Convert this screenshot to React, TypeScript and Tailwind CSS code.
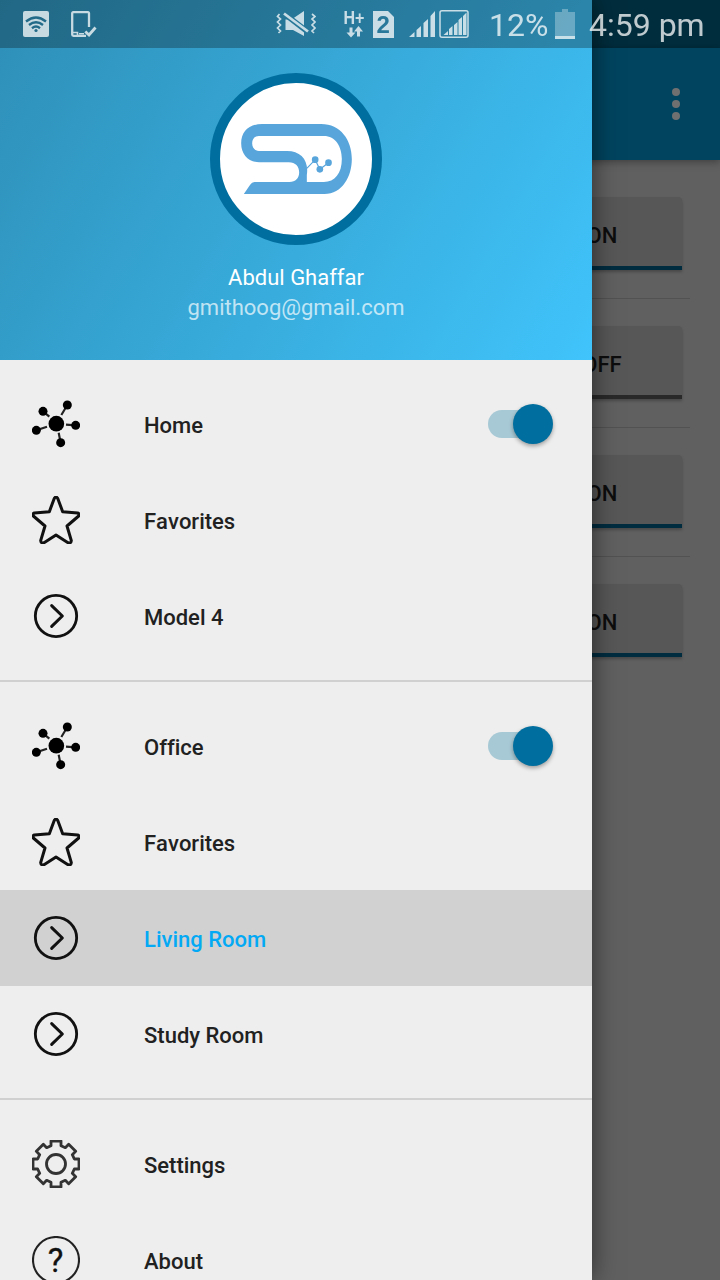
import React from "react";

const HubIcon = () => (
  <svg viewBox="0 0 144 144" className="size-12" stroke="#222" strokeWidth="6.5">
    <path d="M33 34L52 50M106 15L88 45M131 76L102 74M13 91L45 80M86 128L80 98" />
    <g fill="#000" stroke="none">
      <circle cx="73" cy="71" r="23.5" />
      <circle cx="33" cy="34" r="13.5" />
      <circle cx="106" cy="15" r="13.5" />
      <circle cx="131" cy="76" r="13.5" />
      <circle cx="13" cy="91" r="13.5" />
      <circle cx="86" cy="128" r="13.5" />
    </g>
  </svg>
);

const StarIcon = () => (
  <svg viewBox="0 0 144 144" className="size-12" fill="none" stroke="#111" strokeWidth="9" strokeLinejoin="round">
    <path d="M67 7Q72 -1 77 7L92 47L137 51Q145 54 140 60L105 90L118 134Q117 143 108 140L72 117L36 140Q27 143 26 134L39 90L4 60Q-1 54 7 51L52 47Z" />
  </svg>
);

const ChevronCircleIcon = () => (
  <svg viewBox="0 0 144 144" className="size-12" fill="none" stroke="#111" strokeLinecap="round" strokeLinejoin="round">
    <circle cx="72" cy="72" r="62" strokeWidth="8.5" />
    <path d="M59 41L91 72L59 103" strokeWidth="9" />
  </svg>
);

const GearIcon = () => (
  <svg viewBox="0 0 144 144" className="size-12" fill="none" stroke="#333" strokeWidth="8.5" strokeLinejoin="round">
    <path d="M57 3H87V17L100 23L110 13L131 34L121 44L127 57H141V87H127L121 100L131 110L110 131L100 121L87 127V141H57V127L44 121L34 131L13 110L23 100L17 87H3V57H17L23 44L13 34L34 13L44 23L57 17Z" />
    <circle cx="72" cy="72" r="28.5" />
  </svg>
);

const HelpIcon = () => (
  <svg viewBox="0 0 48 48" className="size-12">
    <circle cx="24" cy="24" r="23" fill="none" stroke="#222" strokeWidth="2.1" />
    <text x="23.5" y="35.7" textAnchor="middle" fontFamily="Roboto, sans-serif" fontSize="33" fill="#111" stroke="#111" strokeWidth=".3">?</text>
  </svg>
);

const Logo = () => (
  <svg viewBox="182 192 332 210" className="h-[70px] w-[111px]" fill="#58a5dc">
    <path
      fillRule="evenodd"
      d="M190 402H432C485 402 514 350 514 297C514 240 480 192 422 192H245C205 192 182 215 182 250C182 285 205 307 237 307H325C345 307 356 320 356 337C356 355 345 366 327 366H222Q214 366 209 374ZM235 228H430C465 228 484 260 484 297C484 340 463 366 430 366H379V345C386 300 360 273 320 273H235C222 273 215 262 215 250C215 238 222 228 235 228Z"
    />
    <path d="M379 325L404 299L418 328L444 308" fill="none" stroke="#58a5dc" strokeWidth="3.5" />
    <circle cx="404" cy="299" r="10" />
    <circle cx="418" cy="328" r="10" />
    <circle cx="444" cy="308" r="10" />
  </svg>
);

const StatusBar = () => (
  <div className="absolute inset-x-0 top-0 flex h-12 items-center text-[32px] text-white opacity-75">
    <svg viewBox="0 0 26 26" className="ml-[23px] h-[26px] w-[26px]">
      <mask id="wifi-mask">
        <rect width="26" height="26" fill="#fff" />
        <g fill="none" stroke="#000" strokeWidth="2.4">
          <path d="M3 10.5Q13 2.500 23 10.500M6 14Q13 8.500 20 14M9 17.200Q13 14 17 17.200" />
        </g>
        <circle cx="13" cy="19.500" r="1.600" fill="#000" />
      </mask>
      <rect width="26" height="26" rx="2" fill="currentColor" mask="url(#wifi-mask)" />
    </svg>
    <svg viewBox="0 0 26 26" className="ml-[22px] h-[26px] w-[26px]" fill="none" stroke="currentColor">
      <path d="M18 16V2.200Q18 1.200 17 1.200H2.200Q1.200 1.200 1.200 2.200V23.500Q1.200 24.800 2.500 24.800H15" strokeWidth="2.300" />
      <path d="M2 21.500H6.500V24M8 22.700H13" strokeWidth="1.600" />
      <path d="M14.300 20.500L18 24L24.500 16.500" strokeWidth="2.800" />
    </svg>
    <svg viewBox="0 0 40 26" className="ml-[179px] h-[26px] w-10" fill="currentColor">
      <mask id="mute-mask">
        <rect width="40" height="26" fill="#fff" />
        <path d="M6 1L34 22.500" stroke="#000" strokeWidth="5.500" />
      </mask>
      <path d="M9.500 8.500h6L28 0v25L17 19H9.500z" mask="url(#mute-mask)" />
      <path d="M8 2.500L32 20.500" stroke="currentColor" strokeWidth="2.800" />
      <path d="M3.500 3L1.500 5.500L4.500 8L1.500 11L4.500 14L1.500 17L4.500 20L2.500 22M36 3L39 5.500L36 8L39 11L36 14L39 17L36 20L38 22" fill="none" stroke="currentColor" strokeWidth="1.700" />
    </svg>
    <svg viewBox="0 0 22 30" className="ml-[28px] h-[30px] w-[22px]" fill="currentColor">
      <text x="-.5" y="14.500" fontFamily="Liberation Sans, sans-serif" fontWeight="700" fontSize="18" textLength="21" lengthAdjust="spacingAndGlyphs">H+</text>
      <path d="M5.500 18.500h3v5h3l-4.500 5l-4.500-5h3zM13 27.500v-5h-3l4.500-5.500l4.500 5.500h-3v5z" />
    </svg>
    <svg viewBox="0 0 21 27" className="ml-[7px] mr-px h-[27px] w-[21px]">
      <path d="M0 0h15l6 6v21H0z" fill="currentColor" />
      <text x="10.300" y="22" textAnchor="middle" fontFamily="Liberation Sans, sans-serif" fontWeight="700" fontSize="24" fill="#29789a">2</text>
    </svg>
    <svg viewBox="0 0 26 26" className="ml-[14px] h-[26px] w-[26px]" fill="currentColor">
      <path d="M0 26L5.500 21V26zM7.500 26V19L12 15V26zM14.500 26V12L19 8V26zM21.500 26V5L26 0V26z" />
    </svg>
    <svg viewBox="0 0 30 28" className="ml-1 h-7 w-[30px]" fill="currentColor">
      <rect x="1" y=".8" width="28" height="26.400" rx="2" fill="none" stroke="currentColor" strokeWidth="1.5" />
      <path d="M4.500 25L9 21V25zM10 25V19L13.500 16V25zM15 25V15L18.500 12V25zM19.500 25V10L23 7V25zM24 25V6L27.500 2.500V25z" />
    </svg>
    <span className="ml-5 w-[66px] whitespace-nowrap pt-[2px] leading-none">12%</span>
    <svg viewBox="0 0 20 30" className="mb-px h-[30px] w-5" fill="currentColor">
      <path d="M0 3h7V0h6v3h7v24H0z" opacity=".4" />
      <path d="M0 27h20v3H0z" />
    </svg>
    <span className="ml-[14px] whitespace-nowrap pt-[2px] leading-none">4:59 pm</span>
  </div>
);

const rooms = [
  { label: "ON", bar: "bg-[#002c3f]" },
  { label: "OFF", bar: "bg-[#292929]" },
  { label: "ON", bar: "bg-[#002c3f]" },
  { label: "ON", bar: "bg-[#002c3f]" },
];

const Background = () => (
  <main className="flex h-full flex-col bg-[#606060]">
    <div className="h-12 bg-[#002d3d]" />
    <div className="z-0 flex h-28 items-center justify-end bg-[#00445f] pr-10 shadow-[0_2px_8px_rgba(0,0,0,0.35)]">
      <div className="flex flex-col gap-1">
        <i className="size-2 rounded-full bg-[#707070]" />
        <i className="size-2 rounded-full bg-[#707070]" />
        <i className="size-2 rounded-full bg-[#707070]" />
      </div>
    </div>
    <div className="px-[30px] pt-[10px]">
      {rooms.map((r, i) => (
        <div key={i} className="flex h-[129px] justify-end border-b border-[#525252] pt-[27px] pr-2 last:border-transparent">
          <div className="flex h-[73px] w-40 flex-col rounded-t bg-[#575757] text-[22px] font-medium text-[#0d0d0d] shadow-[0_2px_3px_rgba(0,0,0,0.25)]">
            <span className="flex flex-1 items-center justify-center pt-[8px]">{r.label}</span>
            <span className={`h-1 ${r.bar}`} />
          </div>
        </div>
      ))}
    </div>
  </main>
);

const Toggle = () => (
  <div className="flex h-10 w-[65px] items-center">
    <div className="h-7 w-[60px] rounded-full bg-[#a7c9d5]" />
    <div className="-ml-[35px] size-10 shrink-0 rounded-full bg-[#006f9f] shadow-[0_2px_4px_rgba(0,0,0,0.35)]" />
  </div>
);

type RowProps = { icon: React.ReactNode; label: string; toggle?: boolean; active?: boolean };

const Row = ({ icon, label, toggle, active }: RowProps) => (
  <li className={`flex h-24 shrink-0 items-center pr-[39px] pl-8 ${active ? "bg-[#d1d1d1] text-[#03a9f4]" : "text-[#212121]"}`}>
    {icon}
    <span className="ml-16 flex-1 pt-[2px] text-[22px] font-medium">{label}</span>
    {toggle && <Toggle />}
  </li>
);

const Drawer = () => (
  <aside className="absolute inset-y-0 left-0 flex w-[592px] flex-col bg-[#eee] shadow-[0_0_24px_rgba(0,0,0,0.55)]">
    <header className="flex h-[360px] shrink-0 flex-col items-center bg-linear-[121deg] from-[#2e8fb7] to-[#40c4fb]">
      <div className="h-12 w-full bg-black/27" />
      <div className="mt-[25px] flex size-[172px] items-center justify-center rounded-full border-[10px] border-[#006f9f] bg-white">
        <Logo />
      </div>
      <p className="mt-[18px] text-[22px] leading-[30px] text-white">Abdul Ghaffar</p>
      <p className="text-[22px] leading-[30px] text-white/70">gmithoog@gmail.com</p>
    </header>
    <nav className="flex min-h-0 flex-1 flex-col overflow-hidden">
      <ul className="shrink-0 border-b-2 border-[#d0d0d0] py-4">
        <Row icon={<HubIcon />} label="Home" toggle />
        <Row icon={<StarIcon />} label="Favorites" />
        <Row icon={<ChevronCircleIcon />} label="Model 4" />
      </ul>
      <ul className="shrink-0 border-b-2 border-[#d0d0d0] py-4">
        <Row icon={<HubIcon />} label="Office" toggle />
        <Row icon={<StarIcon />} label="Favorites" />
        <Row icon={<ChevronCircleIcon />} label="Living Room" active />
        <Row icon={<ChevronCircleIcon />} label="Study Room" />
      </ul>
      <ul className="shrink-0 pt-4">
        <Row icon={<GearIcon />} label="Settings" />
        <Row icon={<HelpIcon />} label="About" />
      </ul>
    </nav>
  </aside>
);

export default function App() {
  return (
    <div className="relative h-[1280px] w-[720px] overflow-hidden font-[Roboto,sans-serif] [font-kerning:none] [font-variant-ligatures:none]">
      <Background />
      <Drawer />
      <StatusBar />
    </div>
  );
}
